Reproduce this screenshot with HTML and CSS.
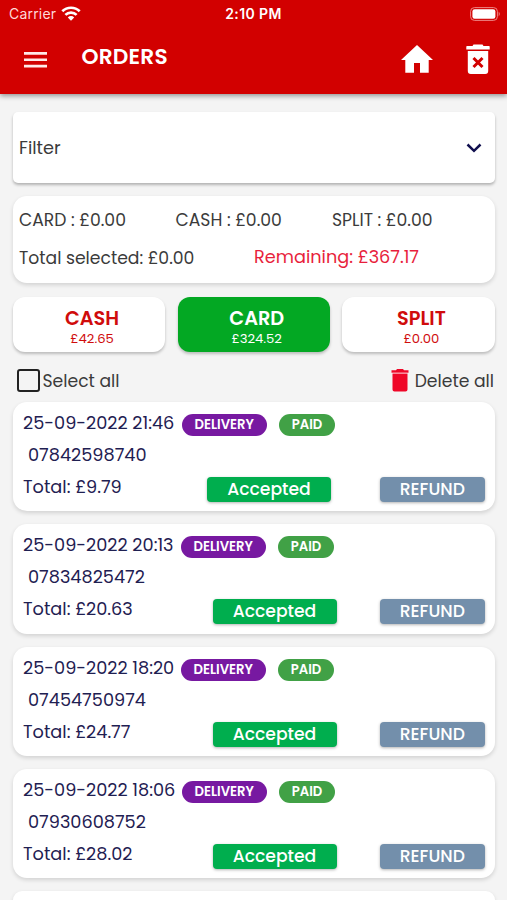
FILE: index.html
```html
<!DOCTYPE html>
<html lang="en">
<head>
<meta charset="utf-8">
<meta name="viewport" content="width=device-width, initial-scale=1">
<title>Orders</title>
<link rel="stylesheet" href="styles.css">
</head>
<body>
<header class="header">
  <div class="status">
    <div class="carrier"><span>Carrier</span>
      <svg width="20" height="15" viewBox="0 0 20 15" fill="none" stroke="#fff" stroke-width="2.7"><path d="M1.3 5.300a12.400 12.400 0 0 1 17.400 0M4.400 8.900a8 8 0 0 1 11.200 0"/><path d="M10 14.800 6.800 11.400a4.600 4.600 0 0 1 6.400 0z" fill="#fff" stroke="none"/></svg>
    </div>
    <span class="time">2:10 PM</span>
    <svg class="battery" width="31" height="14" viewBox="0 0 31 14"><rect x=".6" y=".6" width="26.8" height="12.8" rx="3.8" fill="none" stroke="#ee8583" stroke-width="1"/><rect x="2.4" y="2.3" width="23" height="9.4" rx="2.2" fill="#fff"/><path d="M28.7 4.6q2.2 2.4 0 4.8z" fill="#ee8583"/></svg>
  </div>
  <nav class="bar">
    <svg class="menu" width="23" height="16" viewBox="0 0 23 16" fill="#ffe9e8"><path d="M0 0h23v2.7H0zM0 6.4h23v2.7H0zM0 12.8h23v2.7H0z"/></svg>
    <h1>ORDERS</h1>
    <svg class="home" width="32" height="28" viewBox="0 0 32 28" fill="#fff"><path d="M16 0 32 15h-4.3v12.7H19V18h-6v9.7H4.3V15H0z"/></svg>
    <svg class="bin" width="24" height="30" viewBox="0 0 24 30"><path d="M7.5.5h9l1 1.5H23a.7.7 0 0 1 .7.7v2.8H.3V2.7A.7.7 0 0 1 1 2h5.500zM1.800 7h20.400v20a3 3 0 0 1-3 3H4.800a3 3 0 0 1-3-3z" fill="#fff"/><path d="m7.500 14 9 9m0-9-9 9" stroke="#d20000" stroke-width="3"/></svg>
  </nav>
</header>
<main>
  <section class="card filter"><span>Filter</span>
    <svg width="16" height="10" viewBox="0 0 16 10" fill="none" stroke="#11104f" stroke-width="2.500"><path d="m1.500 1.500 6.500 6.300 6.500-6.300"/></svg>
  </section>
  <section class="card summary">
    <div class="methods"><span>CARD : £0.00</span><span>CASH : £0.00</span><span>SPLIT : £0.00</span></div>
    <div class="totals"><span class="selected">Total selected: £0.00</span><span class="remaining">Remaining: £367.17</span></div>
  </section>
  <section class="tabs">
    <div class="tab"><b>CASH</b><span>£42.65</span></div>
    <div class="tab active"><b>CARD</b><span>£324.52</span></div>
    <div class="tab"><b>SPLIT</b><span>£0.00</span></div>
  </section>
  <div class="actions">
    <div class="select"><i class="box"></i><span>Select all</span></div>
    <div class="delete"><svg width="18" height="23" viewBox="0 0 18 23" fill="#ef0728"><path d="M6 0h6l1 1.200h4.500v2.500H.5V1.200H5zM1.500 5h15v15.500a2 2 0 0 1-2 2h-11a2 2 0 0 1-2-2z"/><path d="M1.500 3.700h15V5h-15z" fill="#f98a99"/></svg><span>Delete all</span></div>
  </div>
  <section class="orders">
    <article class="card order short">
      <div class="line"><span class="date">25-09-2022 21:46</span><span class="pill delivery">DELIVERY</span><span class="pill paid">PAID</span></div>
      <div class="phone">07842598740</div>
      <div class="line foot"><span class="total">Total: £9.79</span><span class="btn accepted">Accepted</span><span class="btn refund">REFUND</span></div>
    </article>
    <article class="card order">
      <div class="line"><span class="date">25-09-2022 20:13</span><span class="pill delivery">DELIVERY</span><span class="pill paid">PAID</span></div>
      <div class="phone">07834825472</div>
      <div class="line foot"><span class="total">Total: £20.63</span><span class="btn accepted">Accepted</span><span class="btn refund">REFUND</span></div>
    </article>
    <article class="card order">
      <div class="line"><span class="date">25-09-2022 18:20</span><span class="pill delivery">DELIVERY</span><span class="pill paid">PAID</span></div>
      <div class="phone">07454750974</div>
      <div class="line foot"><span class="total">Total: £24.77</span><span class="btn accepted">Accepted</span><span class="btn refund">REFUND</span></div>
    </article>
    <article class="card order">
      <div class="line"><span class="date wide">25-09-2022 18:06</span><span class="pill delivery">DELIVERY</span><span class="pill paid">PAID</span></div>
      <div class="phone">07930608752</div>
      <div class="line foot"><span class="total">Total: £28.02</span><span class="btn accepted">Accepted</span><span class="btn refund">REFUND</span></div>
    </article>
    <article class="card order last"></article>
  </section>
</main>
</body>
</html>
```
FILE: styles.css
```css
* { box-sizing: border-box; }
body { height: 900px; margin: 0; overflow: hidden; background: #f4f4f4; color: #3b3b3b; font: 17.200px/24px Poppins, Inter, sans-serif; white-space: nowrap; }
svg { display: block; flex: none; }
.header { height: 94px; background: #d20000; color: #fff; box-shadow: 0 2px 5px rgba(0,0,0,.4); }
.status { display: grid; grid-template-columns: 1fr auto 1fr; height: 28px; padding: 0 6px 0 9px; align-items: center; font: 14px/28px Inter, sans-serif; }
.carrier { display: flex; gap: 5px; align-items: center; color: #ffd9d8; letter-spacing: .2px; }
.carrier svg { margin-top: -2px; }
.time { margin-right: 3px; font-weight: 600; font-size: 14px; letter-spacing: .4px; }
.battery { justify-self: end; margin-top: -1px; }
.bar { display: flex; height: 66px; padding: 0 17.500px 0 24px; align-items: flex-start; }
.menu { margin-top: 24px; }
h1 { margin: 17px auto 0 34.500px; font: 600 21.700px/24px Poppins, Inter, sans-serif; letter-spacing: .2px; }
.home { margin: 17px 32.500px 0 0; }
.bin { margin-top: 16px; }
main { padding: 18px 12.500px 0 13px; }
.card { background: #fff; border-radius: 14px; box-shadow: 0 2px 4px rgba(0,0,0,.14); }
.filter { display: flex; height: 71px; padding: 0 13px 0 6px; align-items: center; justify-content: space-between; border-radius: 5px; box-shadow: 0 2px 3px rgba(0,0,0,.27); font-size: 17.700px; }
.summary { height: 87px; margin-top: 13px; padding: 12px 6px; }
.methods { display: grid; grid-template-columns: 156.500px 156.500px 1fr; }
.totals { display: grid; grid-template-columns: 235px 1fr; margin-top: 13px; }
.selected { padding-top: 1px; }
.remaining { color: #e81e3c; font-size: 17.700px; }
.tabs { display: grid; grid-template-columns: repeat(3, 1fr); gap: 12.500px; margin-top: 14px; }
.tab { display: flex; flex-direction: column; height: 55px; padding: 10px 0 0 6px; align-items: center; border-radius: 12px; background: #fff; color: #d00c0c; box-shadow: 0 2px 3px rgba(0,0,0,.23); }
.tab b { font-size: 19.300px; font-weight: 600; line-height: 24px; }
.tab span { font-size: 13.200px; line-height: 15px; }
.tab.active { background: #03a823; color: #fff; }
.actions { display: flex; height: 50px; padding: 7px .5px 0 3.500px; align-items: center; justify-content: space-between; }
.select, .delete { display: flex; align-items: center; }
.select { gap: 3px; }
.delete { gap: 6px; }
.box { width: 23px; height: 23px; border: 2px solid #222; border-radius: 3px; }
.orders { display: flex; flex-direction: column; gap: 13px; }
.order { height: 109.300px; padding: 9px 9.500px 0 10px; color: #1f2052; font-size: 17.700px; }
.order.last { height: 9px; padding: 0; border-radius: 14px 14px 0 0; }
.line { display: flex; height: 26px; }
.pill { height: 22px; margin-top: 3px; border-radius: 11px; color: #fff; font-size: 13.200px; font-weight: 600; line-height: 22px; text-align: center; }
.date { width: 157.500px; }
.short .date, .wide { width: 158.500px; }
.delivery { width: 85.500px; background: #7719a1; }
.paid { width: 56px; margin-left: 12px; background: #41a146; }
.phone { margin: 6px 0 0 5px; }
.foot { margin-top: 8px; }
.total { width: 189.500px; }
.short .total { width: 184px; }
.btn { height: 25px; margin-top: 2px; border-radius: 4px; color: #fff; font-size: 17.200px; font-weight: 500; line-height: 25px; text-align: center; box-shadow: 0 1px 3px rgba(0,0,0,.3); }
.accepted { width: 124px; background: #00ae4e; }
.refund { width: 105.500px; margin-left: auto; background: #738fab; }
```
